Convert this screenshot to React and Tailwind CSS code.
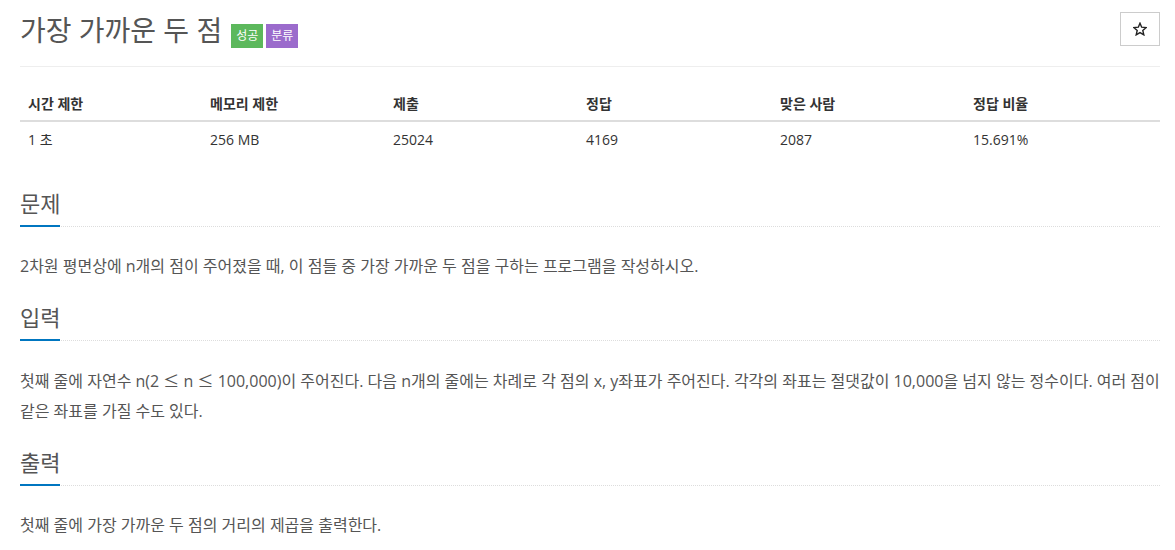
import React from "react";

const FONT = { fontFamily: '"Open Sans", "Noto Sans CJK KR", sans-serif' };
const CJK = { fontFamily: '"Noto Sans CJK KR", sans-serif' };

function Section({ title, children }) {
  return (
    <section className="mt-[21px]">
      <div className="border-b border-dotted border-[#ddd]">
        <h2 className="inline-block -mb-px border-b-2 border-[#0076c0] pb-[7px] text-[22px] leading-[30px] font-normal text-[#555]">
          {title}
        </h2>
      </div>
      <div className="mt-[24px] text-[16px] leading-[30px] text-[#555]">{children}</div>
    </section>
  );
}

export default function App() {
  const heads = ["시간 제한", "메모리 제한", "제출", "정답", "맞은 사람", "정답 비율"];
  const vals = ["1 초", "256 MB", "25024", "4169", "2087", "15.691%"];
  const cols = "grid grid-cols-[182px_183px_193px_194px_193px_1fr]";
  return (
    <div className="w-[1175px] h-[550px] overflow-hidden bg-white" style={FONT}>
      <div className="pl-5 pr-[15px] pt-[12px]">
        <div className="flex items-start border-b border-[#eee] pb-[18px]">
          <h1 className="text-[28px] leading-[36px] font-normal text-[#555]">가장 가까운 두 점</h1>
          <span className="ml-[9px] mt-[12px] h-[24px] px-[5px] bg-[#5cb85c] text-white text-[12px] leading-[24px]">성공</span>
          <span className="ml-[3px] mt-[12px] h-[24px] px-[5px] bg-[#9b6bcc] text-white text-[12px] leading-[24px]">분류</span>
          <div className="flex-1" />
          <button className="w-[40px] h-[34px] border border-[#ccc] bg-white flex items-center justify-center">
            <svg width="14" height="14" viewBox="0 0 24 24" fill="none" stroke="#222" strokeWidth="2.4" strokeLinejoin="miter">
              <polygon points="12,2 14.9,8.9 22.5,9.6 16.8,14.6 18.5,22 12,18.1 5.5,22 7.2,14.6 1.5,9.6 9.1,8.9" />
            </svg>
          </button>
        </div>

        <div className="mt-[17px] text-[14px] text-[#333]">
          <div className={`${cols} border-b-2 border-[#ddd]`}>
            {heads.map((h) => (
              <div key={h} className="px-2 pt-[10px] pb-[6px] leading-[20px] font-bold">{h}</div>
            ))}
          </div>
          <div className={cols}>
            {vals.map((v) => (
              <div key={v} className="px-2 py-2 leading-[20px]">{v}</div>
            ))}
          </div>
        </div>

        <div className="pt-[9px]">
          <Section title="문제">
            <p>2차원 평면상에 n개의 점이 주어졌을 때, 이 점들 중 가장 가까운 두 점을 구하는 프로그램을 작성하시오.</p>
          </Section>
          <Section title="입력">
            <p>
              첫째 줄에 자연수 n(2 <span style={CJK}>≤</span> n <span style={CJK}>≤</span> 100,000)이 주어진다. 다음 n개의 줄에는 차례로 각 점의 x, y좌표가 주어진다. 각각의 좌표는 절댓값이 10,000을 넘지 않는 정수이다. 여러 점이 같은 좌표를 가질 수도 있다.
            </p>
          </Section>
          <Section title="출력">
            <p>첫째 줄에 가장 가까운 두 점의 거리의 제곱을 출력한다.</p>
          </Section>
        </div>
      </div>
    </div>
  );
}
